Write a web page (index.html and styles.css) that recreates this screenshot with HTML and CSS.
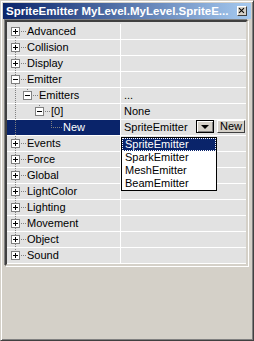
FILE: index.html
```html
<!DOCTYPE html>
<html>
<head>
<meta charset="utf-8">
<link rel="stylesheet" href="styles.css">
</head>
<body>
<div class="window">
  <div class="titlebar">
    <span class="title">SpriteEmitter MyLevel.MyLevel.SpriteE...</span>
    <span class="close"></span>
  </div>
  <div class="grid">
    <div class="row">
      <div class="name"><i class="tw first"><b class="box plus"></b></i><span class="label">Advanced</span></div>
      <div class="value"></div>
    </div>
    <div class="row">
      <div class="name"><i class="tw tee"><b class="box plus"></b></i><span class="label">Collision</span></div>
      <div class="value"></div>
    </div>
    <div class="row">
      <div class="name"><i class="tw tee"><b class="box plus"></b></i><span class="label">Display</span></div>
      <div class="value"></div>
    </div>
    <div class="row">
      <div class="name"><i class="tw tee"><b class="box"></b></i><span class="label">Emitter</span></div>
      <div class="value"></div>
    </div>
    <div class="row">
      <div class="name"><i class="tw pipe"></i><i class="tw ell"><b class="box"></b></i><span class="label">Emitters</span></div>
      <div class="value">...</div>
    </div>
    <div class="row">
      <div class="name"><i class="tw pipe"></i><i class="tw"></i><i class="tw ell"><b class="box"></b></i><span class="label">[0]</span></div>
      <div class="value">None</div>
    </div>
    <div class="row selected">
      <div class="name"><i class="tw pipe"></i><i class="tw"></i><i class="tw"></i><i class="tw ell"></i><span class="label">New</span></div>
      <div class="value combo-cell">
        <span class="combo-text">SpriteEmitter</span>
        <span class="drop"><span class="arrow"></span></span>
        <span class="btn">New</span>
        <ul class="droplist">
          <li class="current">SpriteEmitter</li>
          <li>SparkEmitter</li>
          <li>MeshEmitter</li>
          <li>BeamEmitter</li>
        </ul>
      </div>
    </div>
    <div class="row">
      <div class="name"><i class="tw tee"><b class="box plus"></b></i><span class="label">Events</span></div>
      <div class="value"></div>
    </div>
    <div class="row">
      <div class="name"><i class="tw tee"><b class="box plus"></b></i><span class="label">Force</span></div>
      <div class="value"></div>
    </div>
    <div class="row">
      <div class="name"><i class="tw tee"><b class="box plus"></b></i><span class="label">Global</span></div>
      <div class="value"></div>
    </div>
    <div class="row">
      <div class="name"><i class="tw tee"><b class="box plus"></b></i><span class="label">LightColor</span></div>
      <div class="value"></div>
    </div>
    <div class="row">
      <div class="name"><i class="tw tee"><b class="box plus"></b></i><span class="label">Lighting</span></div>
      <div class="value"></div>
    </div>
    <div class="row">
      <div class="name"><i class="tw tee"><b class="box plus"></b></i><span class="label">Movement</span></div>
      <div class="value"></div>
    </div>
    <div class="row">
      <div class="name"><i class="tw tee"><b class="box plus"></b></i><span class="label">Object</span></div>
      <div class="value"></div>
    </div>
    <div class="row">
      <div class="name"><i class="tw ell"><b class="box plus"></b></i><span class="label">Sound</span></div>
      <div class="value"></div>
    </div>
  </div>
</div>
</body>
</html>
```

FILE: styles.css
```css
* {
  box-sizing: border-box;
}
body {
  margin: 0;
  background-color: #d4d0c8;
  font-family: "Liberation Sans", Arial, sans-serif;
  font-size: 11px;
  color: #000;
}
.window {
  width: 254px;
  height: 341px;
  padding: 2px;
  background-color: #d4d0c8;
  border: 1px solid;
  border-color: #d4d0c8 #404040 #404040 #d4d0c8;
  box-shadow: inset 1px 1px #fff, inset -1px -1px #808080;
}
.titlebar {
  display: flex;
  align-items: center;
  height: 16px;
  padding-left: 3px;
  background: linear-gradient(to right, #0a246a, #a6caf0);
}
.title {
  flex: 1;
  color: #fff;
  font-size: 11.5px;
  font-weight: bold;
  white-space: nowrap;
  overflow: hidden;
}
.close {
  position: relative;
  width: 10px;
  height: 10px;
  margin-right: 4px;
  background-color: #d4d0c8;
  border: 1px solid;
  border-color: #fff #404040 #404040 #fff;
}
.close::before,
.close::after {
  content: "";
  position: absolute;
  left: 3px;
  top: 0;
  width: 1px;
  height: 7px;
  background-color: #000;
  transform: rotate(45deg);
}
.close::after {
  transform: rotate(-45deg);
}
.grid {
  width: 243px;
  margin: 1px 0 0 2px;
  padding-top: 2px;
  background-color: #e2e2e2;
  border: 2px solid;
  border-color: #404040 #d4d0c8 #d4d0c8 #404040;
  box-shadow: -1px -1px #808080, 1px 1px #fff;
}
.row {
  display: flex;
  height: 16px;
  border-bottom: 1px solid #fff;
  line-height: 15px;
}
.name {
  display: flex;
  width: 114px;
  padding-left: 2px;
  border-right: 1px solid #fff;
}
.value {
  flex: 1;
  padding-left: 3px;
  white-space: nowrap;
}
.label {
  margin-left: 6px;
  white-space: nowrap;
}
.selected .name {
  background-color: #0a246a;
}
.selected .label {
  color: #fff;
}

/* tree lines */
.tw {
  position: relative;
  flex: none;
  width: 12px;
  height: 15px;
}
.tw::before,
.tw::after {
  content: "";
  position: absolute;
}
.pipe::before,
.tee::before {
  left: 6px;
  top: 0;
  width: 1px;
  height: 15px;
  background: repeating-linear-gradient(to bottom, #808080 0 1px, transparent 1px 2px);
}
.ell::before {
  left: 6px;
  top: 1px;
  width: 1px;
  height: 7px;
  background: repeating-linear-gradient(to bottom, #808080 0 1px, transparent 1px 2px);
}
.first::before {
  left: 6px;
  top: 7px;
  width: 1px;
  height: 8px;
  background: repeating-linear-gradient(to bottom, #808080 0 1px, transparent 1px 2px);
}
.tee::after,
.ell::after,
.first::after {
  left: 7px;
  top: 7px;
  width: 10px;
  height: 1px;
  background: repeating-linear-gradient(to right, transparent 0 1px, #808080 1px 2px);
}
.box {
  position: absolute;
  z-index: 1;
  left: 2px;
  top: 3px;
  width: 9px;
  height: 9px;
  background-color: #fff;
  border: 1px solid #808080;
}
.box::before {
  content: "";
  position: absolute;
  left: 1px;
  top: 3px;
  width: 5px;
  height: 1px;
  background-color: #000;
}
.plus::after {
  content: "";
  position: absolute;
  left: 3px;
  top: 1px;
  width: 1px;
  height: 5px;
  background-color: #000;
}

/* combo editor */
.combo-cell {
  position: relative;
  display: flex;
  align-items: flex-start;
  padding-right: 1px;
}
.combo-text {
  flex: 1;
}
.drop {
  display: flex;
  align-items: center;
  justify-content: center;
  width: 18px;
  height: 13px;
  background-color: #d4d0c8;
  border: 1px solid #000;
  box-shadow: inset 1px 1px #fff, inset -1px -1px #808080;
}
.arrow {
  width: 0;
  height: 0;
  border-left: 4px solid transparent;
  border-right: 4px solid transparent;
  border-top: 4px solid #000;
}
.btn {
  width: 28px;
  height: 13px;
  margin-left: 3px;
  line-height: 11px;
  text-align: center;
  background-color: #d4d0c8;
  border: 1px solid;
  border-color: #fff #404040 #404040 #fff;
}
.droplist {
  position: absolute;
  z-index: 2;
  left: 0;
  top: 17px;
  width: 96px;
  margin: 0;
  padding: 0;
  list-style: none;
  background-color: #fff;
  border: 1px solid #000;
}
.droplist li {
  height: 13px;
  padding-left: 3px;
  line-height: 13px;
}
.droplist .current {
  color: #fff;
  background-color: #0a246a;
  outline: 1px dotted #fff;
  outline-offset: -1px;
}
```
